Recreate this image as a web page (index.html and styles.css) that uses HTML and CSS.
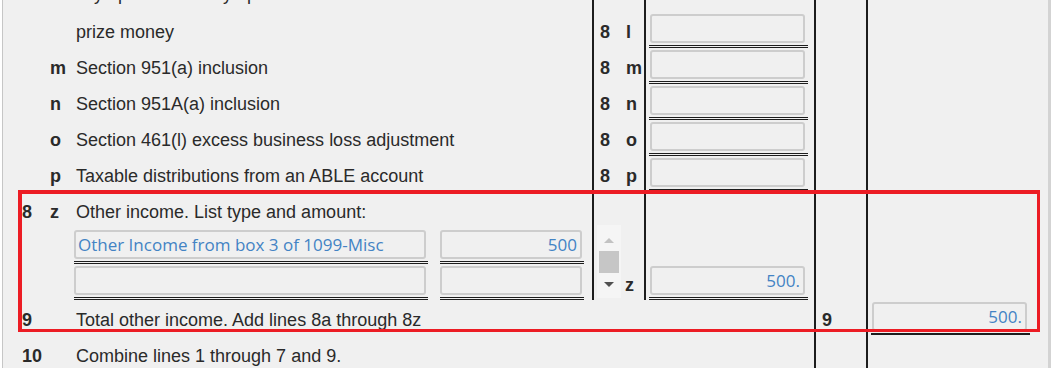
FILE: index.html
```html
<!DOCTYPE html>
<html lang="en">
<head>
  <meta charset="UTF-8" />
  <meta name="viewport" content="width=device-width, initial-scale=1.0" />
  <title>Schedule 1 - Additional Income</title>
  <link rel="stylesheet" href="styles.css">
</head>
<body>
  <div class="sheet">
    <div class="row cut">
      <div class="num txt"></div>
      <div class="let txt">l</div>
      <div class="desc txt">Olympic and Paralympic medals and USOC</div>
      <div class="ref lined"></div>
      <div class="amt lined"></div>
      <div class="ref2"></div>
      <div class="tot"></div>
    </div>

    <div class="row">
      <div class="num txt"></div>
      <div class="let txt"></div>
      <div class="desc txt">prize money</div>
      <div class="ref lined txt"><span class="n8">8</span>l</div>
      <div class="amt lined"><span class="field"><input type="text" name="line8l"></span></div>
      <div class="ref2"></div>
      <div class="tot"></div>
    </div>

    <div class="row">
      <div class="num txt"></div>
      <div class="let txt">m</div>
      <div class="desc txt">Section 951(a) inclusion</div>
      <div class="ref lined txt"><span class="n8">8</span>m</div>
      <div class="amt lined"><span class="field"><input type="text" name="line8m"></span></div>
      <div class="ref2"></div>
      <div class="tot"></div>
    </div>

    <div class="row">
      <div class="num txt"></div>
      <div class="let txt">n</div>
      <div class="desc txt">Section 951A(a) inclusion</div>
      <div class="ref lined txt"><span class="n8">8</span>n</div>
      <div class="amt lined"><span class="field"><input type="text" name="line8n"></span></div>
      <div class="ref2"></div>
      <div class="tot"></div>
    </div>

    <div class="row">
      <div class="num txt"></div>
      <div class="let txt">o</div>
      <div class="desc txt">Section 461(l) excess business loss adjustment</div>
      <div class="ref lined txt"><span class="n8">8</span>o</div>
      <div class="amt lined"><span class="field"><input type="text" name="line8o"></span></div>
      <div class="ref2"></div>
      <div class="tot"></div>
    </div>

    <div class="row">
      <div class="num txt"></div>
      <div class="let txt">p</div>
      <div class="desc txt">Taxable distributions from an ABLE account</div>
      <div class="ref lined txt"><span class="n8">8</span>p</div>
      <div class="amt lined"><span class="field"><input type="text" name="line8p"></span></div>
      <div class="ref2"></div>
      <div class="tot"></div>
    </div>

    <!-- 8z: list of other income, two entries visible -->
    <div class="row tall">
      <div class="num txt">8</div>
      <div class="let txt">z</div>
      <div class="desc">
        <div class="txt head">Other income. List type and amount:</div>
        <div class="pairs">
          <span class="field"><input type="text" class="kind" value="Other Income from box 3 of 1099-Misc"></span>
          <span class="field"><input type="text" value="500"></span>
          <span class="field"><input type="text" class="kind"></span>
          <span class="field"><input type="text"></span>
        </div>
      </div>
      <div class="ref lined spin-cell">
        <span class="spin"><i class="up"></i><i class="thumb"></i><i class="down"></i></span>
        <b>z</b>
      </div>
      <div class="amt lined low"><span class="field"><input type="text" name="line8z" value="500."></span></div>
      <div class="ref2"></div>
      <div class="tot"></div>
    </div>

    <div class="row">
      <div class="num txt">9</div>
      <div class="let"></div>
      <div class="desc txt">Total other income. Add lines 8a through 8z</div>
      <div class="ref"></div>
      <div class="amt"></div>
      <div class="ref2 txt">9</div>
      <div class="tot"><span class="field single"><input type="text" name="line9" value="500."></span></div>
    </div>

    <div class="row">
      <div class="num txt">10</div>
      <div class="let"></div>
      <div class="desc txt">Combine lines 1 through 7 and 9.</div>
      <div class="ref"></div>
      <div class="amt"></div>
      <div class="ref2"></div>
      <div class="tot"></div>
    </div>

    <div class="callout"></div>
  </div>
</body>
</html>
```

FILE: styles.css
```css
* {
  box-sizing: border-box;
}

body {
  margin: 0;
  background-color: #fff;
  font-family: "Liberation Sans", Arial, sans-serif;
  font-size: 18px;
  color: #2a2a2a;
  overflow: hidden;
}

.sheet {
  position: relative;
  width: 1049px;
  height: 392px;
  margin: -24px 0 0 2px;
  overflow: hidden;
  background-color: #f0f0f0;
  border-left: 1px solid #c6c6c6;
  border-right: 3px solid #d3d3d3;
}

.row {
  display: grid;
  grid-template-columns: 45px 26px 518px 52px 170px 52px 182px;
  height: 36px;
}

.row.tall {
  height: 108px;
}

.txt {
  padding-top: 10px;
  line-height: 20px;
  white-space: nowrap;
}

.row.cut .txt {
  padding-top: 8px;
}

.num {
  padding-left: 19px;
  font-weight: bold;
}

.let {
  padding-left: 2px;
  font-weight: bold;
}

.desc.txt,
.desc .txt {
  padding-left: 2px;
}

.desc .head {
  height: 36px;
}

.ref,
.ref2 {
  padding-left: 6px;
  font-weight: bold;
}

.n8 {
  display: inline-block;
  width: 26px;
}

.lined,
.ref2,
.tot {
  border-left: 2px solid #1d1d1d;
}

.amt,
.tot {
  padding-top: 2px;
}

.amt.low {
  padding-top: 74px;
}

/* input box sitting on a double rule */
.field {
  display: block;
  width: 159px;
  margin-left: 3px;
  padding: 0 3px 2px 1px;
  border-bottom: 3px double #1d1d1d;
}

.field.single {
  border-bottom: 2px solid #1d1d1d;
}

.field input {
  display: block;
  width: 100%;
  height: 29px;
  margin: 0;
  padding: 0 3px;
  border: 2px solid #cdcdcd;
  border-radius: 3px;
  background-color: #f0f0f0;
  font-family: "Open Sans", sans-serif;
  font-size: 17px;
  color: #4383c4;
  text-align: right;
  outline: none;
}

.pairs {
  display: grid;
  grid-template-columns: 354px 144px;
  column-gap: 12px;
}

.pairs .field {
  width: auto;
  margin: 2px 0 0;
  padding: 0 2px 2px 0;
}

.pairs input.kind {
  padding: 0 2px;
  text-align: left;
}

/* little list scroller next to the 8z entries */
.spin-cell {
  display: flex;
  align-items: flex-end;
  padding: 33px 0 0 3px;
}

.spin {
  display: flex;
  flex-direction: column;
  align-items: center;
  align-self: flex-start;
  width: 24px;
  height: 73px;
  background-color: #f5f5f5;
}

.spin i {
  display: block;
}

.spin .up {
  margin-top: 13px;
  border-left: 5px solid transparent;
  border-right: 5px solid transparent;
  border-bottom: 5px solid #c2c2c2;
}

.spin .thumb {
  width: 20px;
  height: 22px;
  margin-top: 8px;
  background-color: #c6c6c6;
}

.spin .down {
  margin-top: 9px;
  border-left: 5px solid transparent;
  border-right: 5px solid transparent;
  border-top: 5px solid #505050;
}

.spin-cell b {
  margin: 0 0 5px 4px;
  line-height: 20px;
}

.callout {
  position: absolute;
  left: 15px;
  top: 214px;
  width: 1022px;
  height: 142px;
  border: 3px solid #ec1c24;
  border-width: 4px 3px 3px 4px;
}
```
